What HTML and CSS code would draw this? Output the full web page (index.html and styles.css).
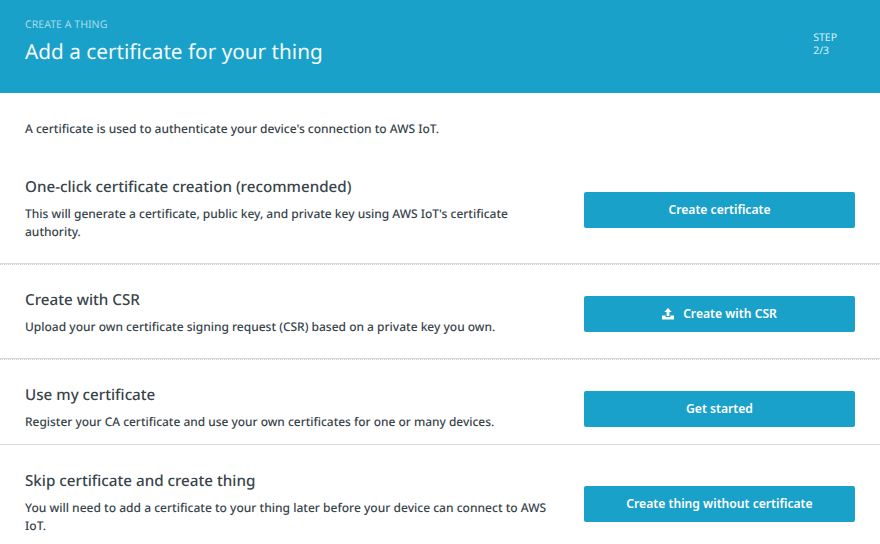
FILE: index.html
```html
<!DOCTYPE html>
<html lang="en">
<head>
<meta charset="utf-8">
<title>Create a thing</title>
<link rel="stylesheet" href="styles.css">
</head>
<body>
<header class="banner">
  <div>
    <p class="eyebrow">CREATE A THING</p>
    <h1>Add a certificate for your thing</h1>
  </div>
  <div class="step">STEP<br>2/3</div>
</header>
<main>
  <p class="intro">A certificate is used to authenticate your device's connection to AWS IoT.</p>
  <section class="option one-click">
    <div class="copy">
      <h2>One-click certificate creation (recommended)</h2>
      <p>This will generate a certificate, public key, and private key using AWS IoT's certificate<br>authority.</p>
    </div>
    <button class="action">Create certificate</button>
  </section>
  <section class="option csr">
    <div class="copy">
      <h2>Create with CSR</h2>
      <p>Upload your own certificate signing request (CSR) based on a private key you own.</p>
    </div>
    <button class="action"><svg class="icon" viewBox="0 0 12 12"><path d="M6 0 9.7 4H7.4V8H4.6V4H2.3ZM0 7.5H3.6V9H8.4V7.5H12V11.5H0Z"/></svg>Create with CSR</button>
  </section>
  <section class="option own">
    <div class="copy">
      <h2>Use my certificate</h2>
      <p>Register your CA certificate and use your own certificates for one or many devices.</p>
    </div>
    <button class="action">Get started</button>
  </section>
  <section class="option skip">
    <div class="copy">
      <h2>Skip certificate and create thing</h2>
      <p>You will need to add a certificate to your thing later before your device can connect to AWS<br>IoT.</p>
    </div>
    <button class="action">Create thing without certificate</button>
  </section>
</main>
</body>
</html>
```
FILE: styles.css
```css
* { box-sizing: border-box; }
body { margin: 0; height: 544px; overflow: hidden; background: #fff; color: #37444a; font: 500 12px/18px "Noto Sans", sans-serif; text-rendering: geometricPrecision; }
h1, h2, p { margin: 0; }
.banner { height: 93px; background: #1aa1c9; color: #f4fafc; display: flex; justify-content: space-between; padding: 18px 43px 0 25px; font-weight: 400; }
.eyebrow { font-size: 10.6px; line-height: 14px; color: #a5dcec; }
h1 { font-size: 20.75px; line-height: 30px; font-weight: 400; margin-top: 5px; }
.step { font-size: 10.5px; line-height: 13px; padding-top: 14px; color: #d9f0f7; }
.intro { padding: 27px 25px 0; height: 80px; }
.option { display: flex; justify-content: space-between; padding: 0 25px; white-space: nowrap; }
.copy { width: 540px; }
h2 { font-size: 15.2px; line-height: 24px; font-weight: 500; margin-bottom: 6px; }
.action { width: 271px; height: 36px; flex: none; border: 0; border-radius: 2px; background: #1aa1c9; color: #fff; font: 600 12.15px/18px "Noto Sans", sans-serif; display: flex; align-items: center; justify-content: center; padding: 0; margin-top: 17px; }
.icon { width: 12px; height: 12px; fill: currentColor; margin: 0 9px 0 0; }
.one-click { height: 92px; padding-top: 2px; }
.csr { height: 95px; padding-top: 23px; }
.one-click, .csr {
  background:
    linear-gradient(#d5dbdb, #d5dbdb) 0 calc(100% - 1px) / 100% 1px no-repeat,
    repeating-linear-gradient(90deg, #c5cece 0 1px, #fff 1px 2px) 0 100% / 100% 1px no-repeat;
}
.csr .action, .own .action { margin-top: 8px; }
.own { height: 85px; padding-top: 23px; border-bottom: 1px solid #d5dbdb; }
.own p { font-size: 11.95px; }
.skip { height: 99px; padding-top: 24px; }
.skip p { font-size: 12.05px; }
```
